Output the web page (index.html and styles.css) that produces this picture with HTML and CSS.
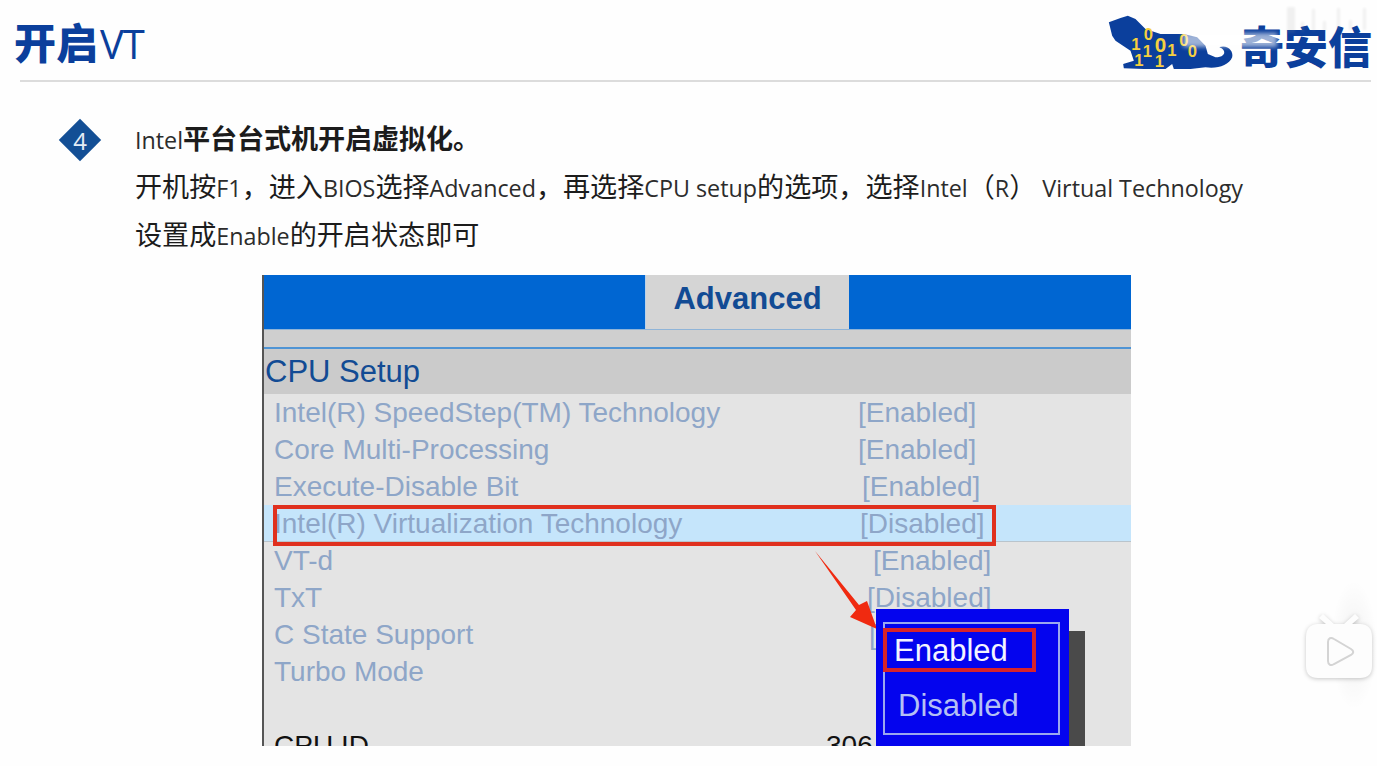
FILE: index.html
```html
<!DOCTYPE html>
<html lang="zh-CN">
<head>
<meta charset="utf-8">
<title>开启VT</title>
<link rel="stylesheet" href="styles.css">
</head>
<body>
<div class="slide">
  <header class="head">
    <h1 class="title"><b>开启</b><span>VT</span></h1>
    <div class="logo">
      <svg class="tiger" viewBox="50 40 380 168" width="127" height="56" aria-hidden="true">
        <path fill="#0b3f9c" d="M55 65 L90 52 L112 45 L135 55 L165 85 L210 100 L280 100 L320 110 L345 135 L352 160 L375 170 C395 170 405 160 400 150 C396 142 385 140 385 140 C410 130 430 150 425 170 C415 195 380 205 345 200 L300 205 L250 205 L245 190 L225 205 L160 205 L100 203 L98 190 L130 180 L120 150 L75 120 L65 105 Z"/>
        <g class="bits">
          <text x="122" y="148">1</text><text x="160" y="118">0</text><text x="157" y="168">1</text>
          <text x="193" y="155" class="big">0</text><text x="230" y="165">1</text><text x="266" y="135">0</text>
          <text x="292" y="170">0</text><text x="131" y="195">1</text><text x="193" y="200">1</text>
        </g>
      </svg>
      <span class="brand">奇安信</span>
      <div class="veil"></div>
    </div>
  </header>

  <section class="intro">
    <div class="badge"><span>4</span></div>
    <div class="copy">
      <p><span class="lat">Intel</span><b>平台台式机开启虚拟化。</b></p>
      <p>开机按<span class="lat">F1</span>，进入<span class="lat">BIOS</span>选择<span class="lat">Advanced</span>，再选择<span class="lat">CPU setup</span>的选项，选择<span class="lat">Intel</span>（<span class="lat">R</span>） <span class="lat">Virtual Technology</span></p>
      <p>设置成<span class="lat">Enable</span>的开启状态即可</p>
    </div>
  </section>

  <div class="bios">
    <div class="bar"><div class="tab">Advanced</div></div>
    <div class="strip"></div>
    <div class="setup">CPU Setup</div>
    <div class="rows">
      <div class="row"><span class="k">Intel(R) SpeedStep(TM) Technology</span><span class="v">[Enabled]</span></div>
      <div class="row"><span class="k">Core Multi-Processing</span><span class="v">[Enabled]</span></div>
      <div class="row"><span class="k">Execute-Disable Bit</span><span class="v v-4">[Enabled]</span></div>
      <div class="row on"><span class="k">Intel(R) Virtualization Technology</span><span class="v v-2">[Disabled]</span></div>
      <div class="row"><span class="k">VT-d</span><span class="v v-15">[Enabled]</span></div>
      <div class="row"><span class="k">TxT</span><span class="v v-9">[Disabled]</span></div>
      <div class="row"><span class="k">C State Support</span><span class="v v-11">[Enabled]</span></div>
      <div class="row"><span class="k">Turbo Mode</span></div>
      <div class="row id"><span class="k">CPU ID</span><span class="v v-id">306A9</span></div>
    </div>
    <div class="mark"></div>
    <svg class="arrow" viewBox="0 0 64 80" width="64" height="80" aria-hidden="true"><path fill="#f02a10" d="M0 0 L44 54 L52 50 L62 78 L35 66 L41 59 Z"/></svg>
    <div class="shadow"></div>
    <div class="pop">
      <div class="frame">
        <div class="opt sel">Enabled</div>
        <div class="opt dim">Disabled</div>
      </div>
    </div>
  </div>

  <svg class="wm" viewBox="0 0 90 36" width="90" height="36" aria-hidden="true">
    <g fill="#9a9a9a"><rect x="0" y="3" width="8" height="26"/><rect x="14" y="18" width="3" height="10"/><rect x="25" y="5" width="3" height="22"/><rect x="36" y="17" width="3" height="10"/><rect x="50" y="4" width="3" height="22"/><rect x="62" y="16" width="3" height="10"/><rect x="76" y="4" width="3" height="22"/></g>
  </svg>
  <div class="fade"></div>
  <svg class="tv" viewBox="0 0 70 70" width="70" height="70" aria-hidden="true">
    <path class="tv-body" d="M19 2 L30 12 H40 L51 2 L55 6 L48 12 H56 C64 12 68 17 68 25 V54 C68 62 64 66 56 66 H14 C6 66 2 62 2 54 V25 C2 17 6 12 14 12 H22 L15 6 Z"/>
    <path class="tv-play" d="M24 30 C24 26 27 25 30 27 L47 37 C50 39 50 41 47 43 L30 52 C27 54 24 53 24 49 Z"/>
  </svg>
</div>
</body>
</html>
```
FILE: styles.css
```css
* { box-sizing: border-box; }
html, body { margin: 0; padding: 0; background: #fff; }
.slide {
  position: relative;
  width: 1377px;
  height: 766px;
  overflow: hidden;
  background: #fefefe;
  font-family: "Noto Sans CJK SC", "Noto Sans", sans-serif;
  color: #1c1c1c;
}
.head {
  display: flex;
  justify-content: space-between;
  align-items: flex-start;
  height: 82px;
  margin: 0 6px 0 20px;
  border-bottom: 2px solid #dcdcdc;
}
.title {
  margin: 16px 0 0 -6px;
  font-size: 42px;
  line-height: 50px;
  font-weight: 400;
  color: #0b3f9c;
  white-space: nowrap;
}
.title b { font-weight: 900; }
.title span { font-family: "Open Sans", sans-serif; font-size: 40px; letter-spacing: -1px; margin-left: 2px; }
.logo {
  position: relative;
  display: flex;
  align-items: flex-start;
  margin: 14px -1px 0 0;
}
.tiger { display: block; }
.bits text { font: 700 50px "Liberation Sans", sans-serif; fill: #f5d040; }
.bits .big { font-size: 62px; }
.brand {
  margin: 3px 0 0 6px;
  font-size: 44px;
  line-height: 56px;
  font-weight: 900;
  color: #0b3f9c;
  white-space: nowrap;
}
.veil {
  position: absolute;
  left: 76px;
  top: 19px;
  width: 94px;
  height: 14px;
  background: rgba(255, 255, 255, .6);
  filter: blur(2px);
}
.intro {
  display: flex;
  margin: 32px 0 0 59px;
  gap: 34px;
}
.badge {
  flex: none;
  position: relative;
  width: 42px;
  height: 42px;
  margin-top: 5px;
  display: flex;
  align-items: center;
  justify-content: center;
}
.badge::before {
  content: "";
  position: absolute;
  left: 6px;
  top: 6px;
  width: 30px;
  height: 30px;
  background: #134f95;
  transform: rotate(45deg);
}
.badge span {
  position: relative;
  font: 400 24px "Open Sans", sans-serif;
  color: #e4ecf5;
}
.copy p {
  margin: 0;
  font-size: 27.1px;
  line-height: 48px;
  height: 48px;
  white-space: nowrap;
}
.copy b { font-weight: 700; letter-spacing: -.1px; }
.lat { font-family: "Open Sans", sans-serif; font-size: 23.3px; color: #2c2c2c; }
.bios {
  position: relative;
  width: 869px;
  height: 471px;
  margin: 17px 0 0 262px;
  overflow: hidden;
  background: #e4e4e4;
  border-left: 2px solid #555;
  font-family: "Liberation Sans", sans-serif;
}
.bar {
  height: 55px;
  padding-left: 381px;
  background: #0066d2;
  border-bottom: 1px solid #8fb4d8;
}
.tab {
  width: 204px;
  height: 54px;
  background: #d5d5d5;
  border-left: 1px solid #b9d2ea;
  color: #124b94;
  font-size: 31px;
  font-weight: 700;
  line-height: 47px;
  text-align: center;
}
.strip {
  height: 19px;
  background: #cfcfcf;
  border-bottom: 2px solid #4f94d4;
}
.setup {
  height: 45px;
  background: #cbcbcb;
  color: #124b94;
  font-size: 31px;
  line-height: 45px;
  padding-left: 1px;
}
.row {
  display: flex;
  height: 37px;
  padding-left: 10px;
  font-size: 28px;
  line-height: 37px;
  color: #8ea6c8;
  white-space: nowrap;
}
.row.on {
  background: #c5e5fb;
  border-bottom: 1px solid #b9c4cc;
}
.k { flex: none; width: 584px; }
.v { flex: none; }
.v-2 { margin-left: 2px; }
.v-4 { margin-left: 4px; }
.v-9 { margin-left: 9px; }
.v-11 { margin-left: 11px; }
.v-15 { margin-left: 15px; }
.row.id { margin-top: 37px; color: #111; }
.v-id { margin-left: -32px; }
.mark {
  position: absolute;
  left: 9px;
  top: 230px;
  width: 723px;
  height: 41px;
  border: 4px solid #e0301e;
}
.arrow { position: absolute; left: 551px; top: 276px; }
.shadow {
  position: absolute;
  left: 790px;
  top: 356px;
  width: 31px;
  height: 120px;
  background: #4a4a4a;
}
.pop {
  position: absolute;
  left: 612px;
  top: 334px;
  width: 193px;
  height: 140px;
  padding: 13px 9px 0 7px;
  background: #0404ee;
}
.frame {
  height: 113px;
  border: 2px solid #9aa8ee;
  padding-top: 4px;
}
.opt {
  font-size: 31px;
  line-height: 43px;
  height: 43px;
  white-space: nowrap;
}
.sel {
  width: 153px;
  height: 44px;
  margin-left: -2px;
  padding-left: 7px;
  border: 4px solid #d8232a;
  color: #f4f4ff;
  line-height: 38px;
}
.dim { margin-top: 12px; padding-left: 13px; color: #b4c0f4; }
.wm {
  position: absolute;
  right: 0;
  top: 4px;
  opacity: .13;
  filter: blur(1px);
}
.fade {
  position: absolute;
  left: 1300px;
  top: 580px;
  width: 77px;
  height: 130px;
  background: radial-gradient(closest-side at 70% 50%, rgba(0,0,0,.05), rgba(0,0,0,0));
}
.tv {
  position: absolute;
  left: 1304px;
  top: 612px;
  filter: drop-shadow(0 1px 2px rgba(0,0,0,.22));
}
.tv-body { fill: #fdfdfd; }
.tv-play { fill: #fdfdfd; stroke: #d4d4d4; stroke-width: 2; }
```
